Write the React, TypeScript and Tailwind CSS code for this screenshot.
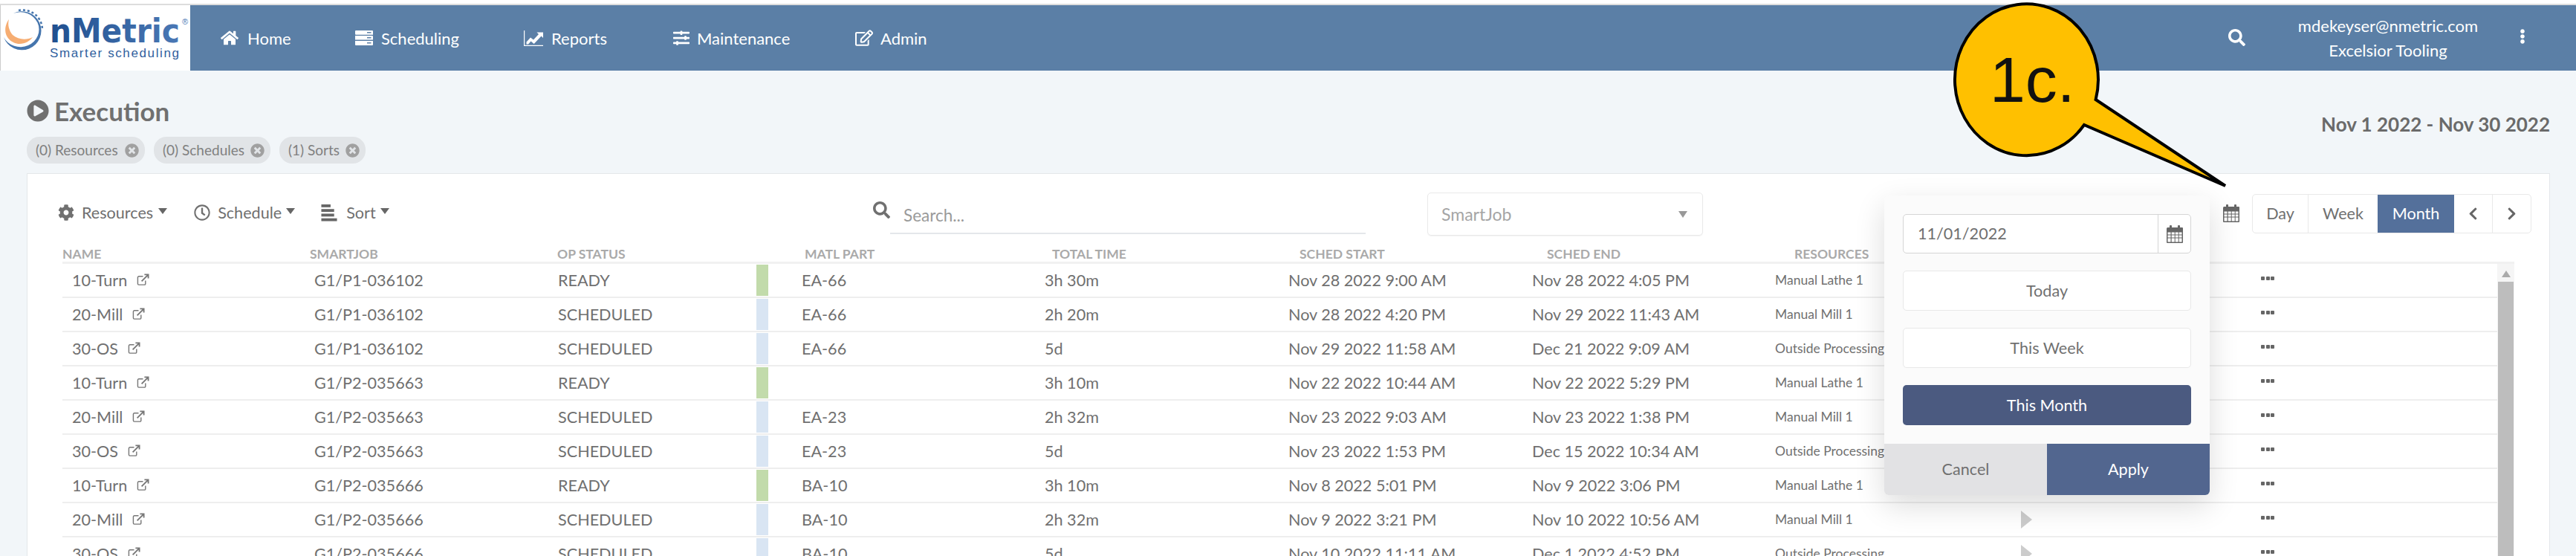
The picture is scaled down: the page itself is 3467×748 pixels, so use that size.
import {
  FaHome,
  FaSlidersH,
  FaRegEdit,
  FaSearch,
  FaEllipsisV,
  FaPlayCircle,
  FaTimesCircle,
  FaCog,
  FaRegClock,
  FaChevronLeft,
  FaChevronRight,
} from "react-icons/fa";

const SchedulingIcon = ({ className }: { className?: string }) => (
  <svg viewBox="0 0 24 20" className={className} fill="currentColor">
    <path d="M1 0h22a1 1 0 0 1 1 1v4.800H1a1 1 0 0 1-1-1V1a1 1 0 0 1 1-1zm15 2v1.600h5.500V2z" fillRule="evenodd" />
    <path d="M0 7h23a1 1 0 0 1 1 1v4.500H0zm16 1.900v1.600h5.500V8.900z" fillRule="evenodd" />
    <path d="M0 14h24v5a1 1 0 0 1-1 1H1a1 1 0 0 1-1-1zm16 1.900v1.600h5.500v-1.600z" fillRule="evenodd" />
  </svg>
);

const ReportsIcon = ({ className }: { className?: string }) => (
  <svg viewBox="0 0 26 21" className={className} fill="currentColor">
    <path d="M0 0h1.200v19.800H26V21H0z" />
    <path d="M3.500 15.500l5.500-6 4 3 7-7.500-2.500-2.500H26v7.500l-2.500-2.500-9.800 10.500-4.200-3.500-3.500 4H3.500z" />
  </svg>
);

const navItems = [
  { name: "Home", icon: <FaHome className="h-[24px] w-[24px]" />, iconClass: "ml-[41px] w-[36px]", textClass: "w-[145px]" },
  { name: "Scheduling", icon: <SchedulingIcon className="h-[20px] w-[24px]" />, iconClass: "w-[35px]", textClass: "w-[192px]" },
  { name: "Reports", icon: <ReportsIcon className="h-[21px] w-[26px]" />, iconClass: "w-[37px]", textClass: "w-[164px]" },
  { name: "Maintenance", icon: <FaSlidersH className="h-[22px] w-[22px]" />, iconClass: "w-[32px]", textClass: "w-[213px]" },
  { name: "Admin", icon: <FaRegEdit className="h-[24px] w-[24px]" />, iconClass: "w-[34px]", textClass: "" },
];

const headers = ["NAME", "SMARTJOB", "OP STATUS", "MATL PART", "TOTAL TIME", "SCHED START", "SCHED END", "RESOURCES"];

const rows = [
  ["10-Turn", "G1/P1-036102", "READY", "EA-66", "3h 30m", "Nov 28 2022 9:00 AM", "Nov 28 2022 4:05 PM", "Manual Lathe 1"],
  ["20-Mill", "G1/P1-036102", "SCHEDULED", "EA-66", "2h 20m", "Nov 28 2022 4:20 PM", "Nov 29 2022 11:43 AM", "Manual Mill 1"],
  ["30-OS", "G1/P1-036102", "SCHEDULED", "EA-66", "5d", "Nov 29 2022 11:58 AM", "Dec 21 2022 9:09 AM", "Outside Processing"],
  ["10-Turn", "G1/P2-035663", "READY", "", "3h 10m", "Nov 22 2022 10:44 AM", "Nov 22 2022 5:29 PM", "Manual Lathe 1"],
  ["20-Mill", "G1/P2-035663", "SCHEDULED", "EA-23", "2h 32m", "Nov 23 2022 9:03 AM", "Nov 23 2022 1:38 PM", "Manual Mill 1"],
  ["30-OS", "G1/P2-035663", "SCHEDULED", "EA-23", "5d", "Nov 23 2022 1:53 PM", "Dec 15 2022 10:34 AM", "Outside Processing"],
  ["10-Turn", "G1/P2-035666", "READY", "BA-10", "3h 10m", "Nov 8 2022 5:01 PM", "Nov 9 2022 3:06 PM", "Manual Lathe 1"],
  ["20-Mill", "G1/P2-035666", "SCHEDULED", "BA-10", "2h 32m", "Nov 9 2022 3:21 PM", "Nov 10 2022 10:56 AM", "Manual Mill 1"],
  ["30-OS", "G1/P2-035666", "SCHEDULED", "BA-10", "5d", "Nov 10 2022 11:11 AM", "Dec 1 2022 4:52 PM", "Outside Processing"],
];

const CalendarIcon = ({ className }: { className?: string }) => (
  <svg viewBox="0 0 22 24" className={className} fill="#666">
    <rect x="4" y="0" width="3" height="6" rx="1" />
    <rect x="15" y="0" width="3" height="6" rx="1" />
    <path
      d="M1.500 3H21a1 1 0 0 1 1 1v19a1 1 0 0 1-1 1H1a1 1 0 0 1-1-1V4.500A1.500 1.500 0 0 1 1.500 3zM1.500 9.500v3h4v-3zm5.200 0v3h4v-3zm5 0v3h4v-3zm5 0v3h3.800v-3zM1.500 13.500v3h4v-3zm5.200 0v3h4v-3zm5 0v3h4v-3zm5 0v3h3.800v-3zM1.500 17.500v5h4v-5zm5.200 0v5h4v-5zm5 0v5h4v-5zm5 0v5h3.800v-5z"
      fillRule="evenodd"
    />
  </svg>
);

const LinkIcon = () => (
  <svg viewBox="0 0 18 18" className="ml-[13px] h-[17px] w-[17px]" fill="none" stroke="#777" strokeWidth="1.500">
    <path d="M9 4H3a1.500 1.500 0 0 0-1.500 1.500v9A1.500 1.500 0 0 0 3 16h8a1.500 1.500 0 0 0 1.500-1.500V10" />
    <path d="M7 11l8.500-8.500M11 1.500h5.500V7" strokeWidth="2" />
  </svg>
);

const SortIcon = () => (
  <svg viewBox="0 0 22 24" className="h-[23px] w-[22px]" fill="#666">
    <rect x="0" y="0" width="13" height="4" />
    <rect x="0" y="6.500" width="18" height="4" />
    <rect x="0" y="13" width="18" height="4" />
    <rect x="0" y="19.500" width="22" height="4" />
  </svg>
);

const Caret = ({ className }: { className: string }) => (
  <span className={`mb-[4px] h-0 w-0 border-x-[6px] border-t-[8px] border-x-transparent border-t-[#666] ${className}`} />
);

const Logo = () => (
  <div className="h-full w-[256px] shrink-0 border-l border-[#cccccc] bg-white">
    <svg viewBox="0 0 255 88" className="h-[88px] w-[255px]">
      <defs>
        <linearGradient id="logoText" x1="0" x2="1" y1="0" y2="0">
          <stop offset="0" stopColor="#1f4f8f" />
          <stop offset="1" stopColor="#4a78b5" />
        </linearGradient>
      </defs>
      <path d="M17 11 A26 26 0 1 1 4 43 A25 23.500 0 1 0 17 11 Z" fill="#4575ad" />
      <path d="M24 7 A26.500 26.500 0 0 1 56 33" fill="none" stroke="#4575ad" strokeWidth="2.500" strokeDasharray="3 3" />
      <path d="M11 19 C3 30 5 44 17 50 C27 55 38 50 43 43 C35 47 24 47 16 40 C11 34 9 26 11 19 Z" fill="#f6ad72" />
      <text
        x="66"
        y="50"
        fontFamily="'DejaVu Sans', sans-serif"
        fontWeight="700"
        fontSize="45"
        textLength="175"
        lengthAdjust="spacingAndGlyphs"
        fill="url(#logoText)"
      >
        nMetric
      </text>
      <text x="244" y="26" fontFamily="'Liberation Sans', sans-serif" fontSize="11" fill="#4a78b5">
        ®
      </text>
      <text x="66" y="70" fontFamily="'Liberation Sans', sans-serif" fontSize="17" textLength="174" fill="#2f5f9e">
        Smarter scheduling
      </text>
    </svg>
  </div>
);

const Callout = () => (
  <svg viewBox="0 0 390 260" className="absolute top-0 left-[2620px] h-[260px] w-[390px]">
    <path
      d="M200.600 134 L375 250 L185 168 A96.500 102 0 1 1 200.600 134 Z"
      fill="#ffc000"
      stroke="#000"
      strokeWidth="4"
      strokeLinejoin="miter"
    />
    <text x="58" y="137" fontFamily="'Liberation Sans', sans-serif" fontSize="86" fill="#111">
      1c.
    </text>
  </svg>
);

const DatePopup = () => (
  <div className="absolute top-[263px] left-[2536px] flex h-[403px] w-[438px] flex-col rounded-[6px] bg-[#fbfbfb] shadow-[0_14px_40px_rgba(0,0,0,0.14)]">
    <div className="flex flex-1 flex-col gap-[23px] px-[25px] pt-[25px]">
      <div className="flex h-[53px] items-stretch rounded-[5px] border border-[#d5d5d5] bg-white">
        <span className="flex flex-1 items-center pl-[19px]">11/01/2022</span>
        <span className="flex w-[44px] items-center justify-center border-l border-[#d5d5d5]">
          <CalendarIcon className="h-[24px] w-[22px]" />
        </span>
      </div>
      <button className="h-[54px] rounded-[5px] border border-[#e8e8e8] bg-white">Today</button>
      <button className="h-[54px] rounded-[5px] border border-[#e8e8e8] bg-white">This Week</button>
      <button className="h-[54px] rounded-[5px] bg-[#4b5a80] text-white">This Month</button>
    </div>
    <div className="flex h-[69px]">
      <button className="w-1/2 rounded-bl-[6px] bg-[#e2e2e4]">Cancel</button>
      <button className="w-1/2 rounded-br-[6px] bg-[#52668f] text-white">Apply</button>
    </div>
  </div>
);

const Chip = ({ label, className }: { label: string; className: string }) => (
  <div className={`flex h-[36px] items-center justify-between rounded-[17px] bg-[#e1e4e7] pr-[8px] pl-[12px] text-[19px] text-[#808080] ${className}`}>
    <span>{label}</span>
    <FaTimesCircle className="h-[19px] w-[19px] text-[#a0a0a0]" />
  </div>
);

const Row = ({ row }: { row: string[] }) => (
  <div className="grid h-[46px] grid-cols-[326px_328px_328px_327px_328px_328px_327px_331px_323px_1fr] items-center border-b-2 border-[#eeeeee] pl-[13px]">
    <div className="flex items-center">
      <span>{row[0]}</span>
      <LinkIcon />
    </div>
    <div>{row[1]}</div>
    <div className="relative flex h-full items-center">
      {row[2]}
      <span className={`absolute top-px left-[267px] h-[42px] w-[16px] ${row[2] === "READY" ? "bg-[#c2dbab]" : "bg-[#d9e5f3]"}`} />
    </div>
    <div>{row[3]}</div>
    <div>{row[4]}</div>
    <div>{row[5]}</div>
    <div>{row[6]}</div>
    <div className="text-[17.500px] whitespace-nowrap">{row[7]}</div>
    <div>
      <span className="block h-0 w-0 border-y-[12px] border-l-[15px] border-y-transparent border-l-[#cccccc]" />
    </div>
    <div className="mb-[5px] flex gap-[1.500px]">
      <i className="h-[5px] w-[5px] rounded-[1px] bg-[#666]" />
      <i className="h-[5px] w-[5px] rounded-[1px] bg-[#666]" />
      <i className="h-[5px] w-[5px] rounded-[1px] bg-[#666]" />
    </div>
  </div>
);

export default function App() {
  return (
    <div className="relative h-[748px] w-[3467px] overflow-hidden bg-[#f2f6f9] font-['Lato',sans-serif] text-[21.600px] text-[#707070]">
      <div className="h-[7px] border-b-[2px] border-[#dddddd] bg-white" />

      <header className="flex h-[88px] items-stretch bg-[#5b7fa6] text-white">
        <Logo />
        {navItems.map(({ name, icon, iconClass, textClass }) => (
          <div key={name} className="flex items-center text-[22px]">
            <span className={`flex items-center ${iconClass}`}>{icon}</span>
            <span className={textClass}>{name}</span>
          </div>
        ))}
        <div className="ml-auto flex items-center">
          <FaSearch className="mb-[2px] h-[23px] w-[23px]" />
          <div className="flex w-[363px] flex-col items-center pl-[21px] text-[22px] leading-[33px]">
            <span>mdekeyser@nmetric.com</span>
            <span>Excelsior Tooling</span>
          </div>
          <FaEllipsisV className="mr-[62px] mb-[4px] h-[20px] w-[20px]" />
        </div>
      </header>

      <main className="pr-[35px] pl-[36px]">
        <div className="flex h-[138px] justify-between">
          <div className="flex flex-col">
            <div className="mt-[29px] flex h-[50px] items-center text-[#707070]">
              <FaPlayCircle className="h-[30px] w-[30px]" />
              <h1 className="ml-[7px] text-[35px] font-bold">Execution</h1>
            </div>
            <div className="mt-[10px] flex gap-[12px]">
              <Chip label="(0) Resources" className="w-[159px]" />
              <Chip label="(0) Schedules" className="w-[157px]" />
              <Chip label="(1) Sorts" className="w-[116px]" />
            </div>
          </div>
          <div className="mt-[53px] text-[26px] font-bold text-[#6a6a6a]">Nov 1 2022 - Nov 30 2022</div>
        </div>

        <section className="h-[600px] border border-[#e4e7ea] bg-white">
          <div className="flex h-[83px] items-end">
            <div className="ml-[41px] flex h-[58px] w-[1097px] items-center pb-[4px]">
              <FaCog className="h-[22px] w-[22px]" />
              <span className="ml-[10px]">Resources</span>
              <Caret className="ml-[7px]" />
              <FaRegClock className="ml-[36px] h-[22px] w-[22px]" />
              <span className="ml-[10px]">Schedule</span>
              <Caret className="ml-[6px]" />
              <span className="ml-[35px]">
                <SortIcon />
              </span>
              <span className="ml-[12px]">Sort</span>
              <Caret className="ml-[6px]" />
            </div>
            <div className="relative mb-[2px] h-[54px] w-[663px]">
              <FaSearch className="absolute top-[10px] left-0 h-[23px] w-[23px]" />
              <span className="absolute top-[12px] left-[41px] text-[22.500px] text-[#9a9a9a]">Search...</span>
              <div className="absolute bottom-0 left-[23px] h-[2px] w-[640px] bg-[#e4e7ea]" />
            </div>
            <div className="ml-[83px] flex h-[58px] w-[371px] items-center justify-between rounded-[5px] border border-[#e9e9e9] pr-[20px] pl-[18px] text-[23px] text-[#a5a5a5] shadow-[0_1px_1px_rgba(0,0,0,0.05)]">
              <span>SmartJob</span>
              <span className="h-0 w-0 border-x-[6px] border-t-[9px] border-x-transparent border-t-[#999]" />
            </div>
            <div className="mb-[3px] ml-[700px] flex h-[54px] w-[415px] items-center justify-between">
              <CalendarIcon className="h-[24px] w-[22px]" />
              <div className="flex h-[53px] w-[376px] items-stretch overflow-hidden rounded-[5px] border border-[#e9e9e9]">
                <span className="flex w-[75px] items-center justify-center border-r border-[#e9e9e9]">Day</span>
                <span className="flex w-[93px] items-center justify-center">Week</span>
                <span className="flex w-[103px] items-center justify-center bg-[#54709b] text-white">Month</span>
                <span className="flex w-[52px] items-center justify-center border-r border-[#e9e9e9]">
                  <FaChevronLeft className="h-[19px] w-[19px] text-[#666]" />
                </span>
                <span className="flex flex-1 items-center justify-center">
                  <FaChevronRight className="h-[19px] w-[19px] text-[#666]" />
                </span>
              </div>
            </div>
          </div>

          <div className="ml-[47px] w-[3300px]">
            <div className="grid h-[38px] grid-cols-[repeat(8,333px)_1fr] items-end border-b-[3px] border-[#f1f1f1] text-[17.500px] leading-[20px] font-bold text-[#aaaaaa]">
              {headers.map((h) => (
                <span key={h}>{h}</span>
              ))}
            </div>
            <div className="flex">
              <div className="w-[3277px]">
                {rows.map((row, i) => (
                  <Row key={i} row={row} />
                ))}
              </div>
              <div className="flex w-[23px] flex-col items-center bg-[#f5f5f5]">
                <span className="mt-[9px] h-0 w-0 border-x-[6px] border-b-[9px] border-x-transparent border-b-[#aaaaaa]" />
                <div className="mt-[6px] h-[400px] w-[21px] bg-[#bdbdbd]" />
              </div>
            </div>
          </div>
        </section>
      </main>

      <DatePopup />
      <Callout />
    </div>
  );
}
